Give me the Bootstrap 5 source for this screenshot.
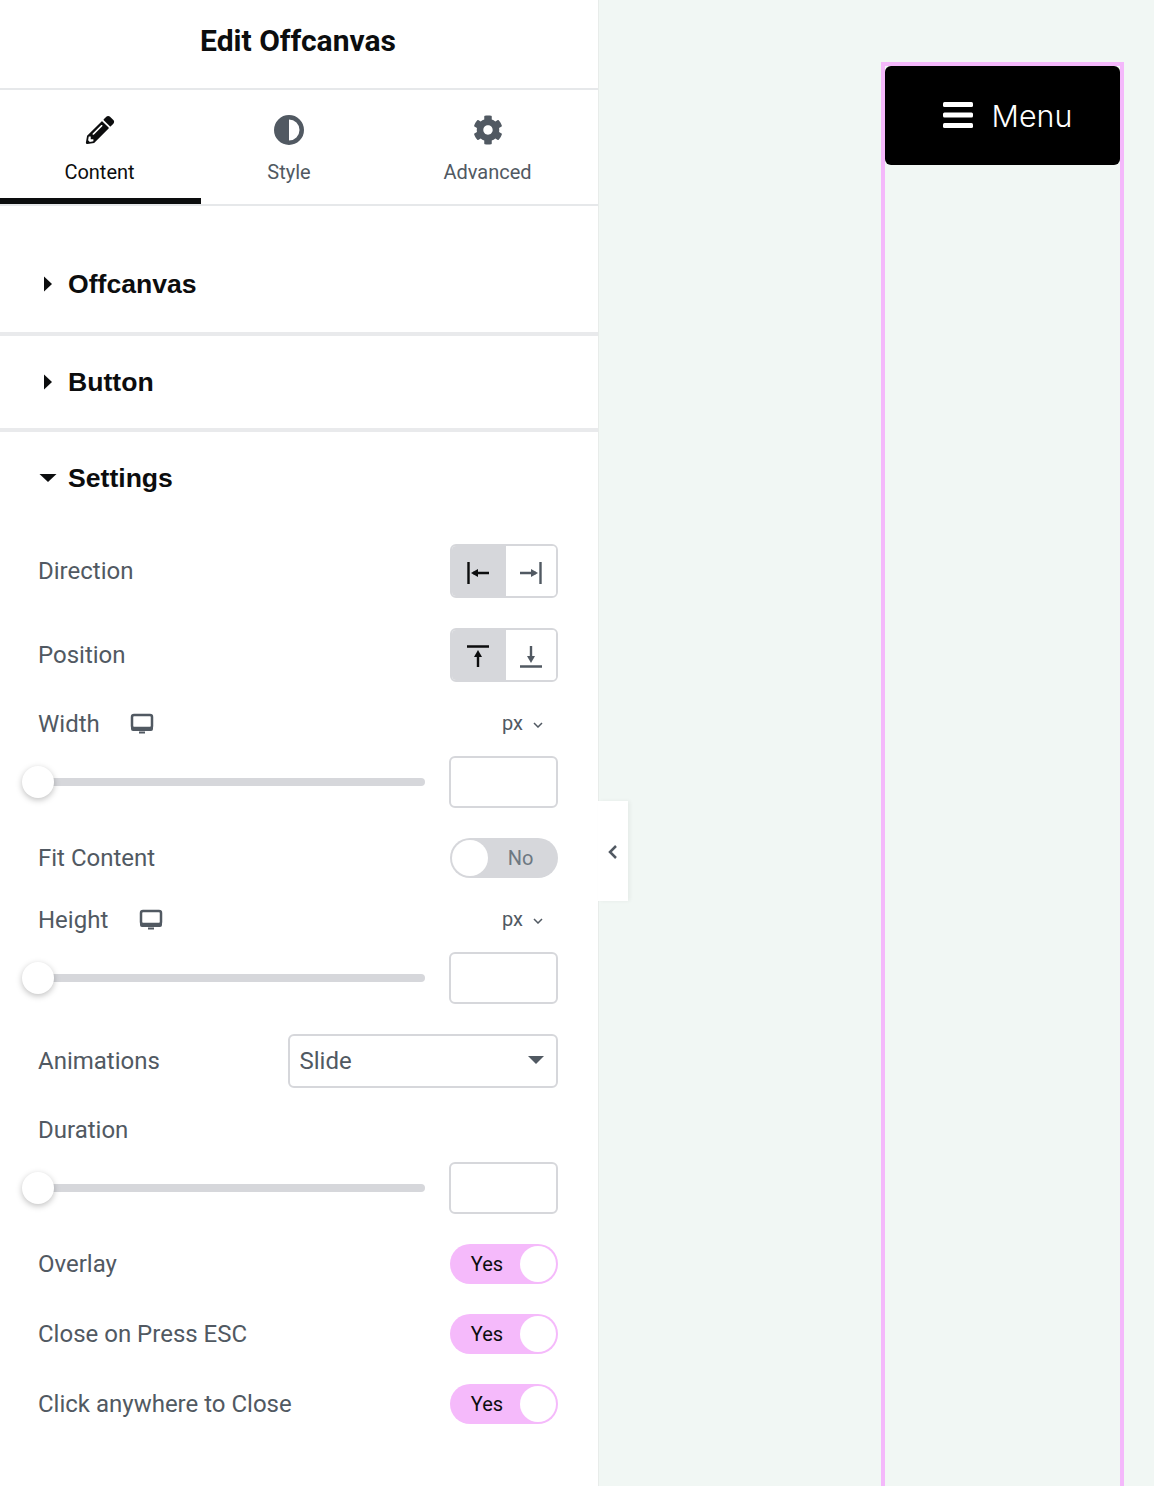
<!DOCTYPE html>
<html lang="en">
<head>
<meta charset="utf-8">
<title>Edit Offcanvas</title>
<link href="https://cdn.jsdelivr.net/npm/bootstrap@5.3.0/dist/css/bootstrap.min.css" rel="stylesheet">
<style>
html,body{height:1486px;overflow:hidden;}
body{font-family:Roboto,sans-serif;color:#515962;background:#f1f7f4;}
.editor{width:1154px;height:1486px;}
.side{width:598px;height:1486px;background:#fff;position:relative;flex:none;}
.head{height:90px;border-bottom:2px solid #e6e8ea;}
.head h1{font-family:Roboto,sans-serif;font-weight:700;font-size:30px;line-height:1;color:#0c0d0e;margin:-6px 0 0 -2px;}
.tabbar{height:116px;border-bottom:2px solid #e6e8ea;}
.tabitem{height:114px;font-size:20px;line-height:24px;padding-top:25px;border-bottom:6px solid transparent;}
.tabitem svg{display:block;margin-bottom:15px;}
.tabitem.on{color:#0c0d0e;border-bottom-color:#0c0d0e;padding-right:2px;}
.w1{width:201px;}.w2{width:176px;}.w3{width:221px;}
.sect{height:92px;padding-left:38px;}
.sect.first{height:126px;padding-top:30px;}
.sect-title{font-family:"Liberation Sans",sans-serif;font-weight:700;font-size:26.6px;line-height:92px;color:#0c0d0e;}
.caret{width:20px;margin-right:10px;}
.divide{height:4px;background:#e9eaec;}
.ctl{padding:20px 40px 0 38px;}
.lbl{font-size:24px;line-height:28px;}
.lbl-dev{gap:30.5px;}
.rowa{margin-top:30px;}
.rowb{margin-top:28px;height:28px;}
.rows{margin-top:18px;}
.seg{width:108px;height:54px;border:2px solid #d6d7db;border-radius:6px;overflow:hidden;}
.seg-i{height:100%;}
.seg-i.on{width:54px;background:#d6d7db;color:#0c0d0e;padding-right:2px;}
.seg-i.off{flex:1 1 auto;background:#fff;color:#515962;}
.seg-low .seg-i{padding-top:3px;}
.unit{font-size:20px;line-height:24px;padding:0 15px 2px 0;}
.unit svg{margin-left:10px;}
.track{width:387px;height:8px;background:#d6d7db;border-radius:4px;position:relative;}
.thumb{position:absolute;left:-16px;top:-12px;width:32px;height:32px;border-radius:50%;background:#fff;box-shadow:0 2px 6px rgba(0,0,0,.25);}
.numbox{width:109px;height:52px;border:2px solid #d6d7db;border-radius:6px;background:#fff;}
.numbox:focus{border-color:#d6d7db;box-shadow:none;}
.sw{width:108px;height:40px;border-radius:20px;font-size:20px;}
.sw-no{background:#d6d7db;color:#6d7882;padding:2px;}
.sw-no .sw-txt{padding-right:3px;}
.sw-yes{background:#f5bafb;color:#0c0d0e;padding:2px;}
.sw-yes .sw-txt{padding-left:2px;}
.knob{width:36px;height:36px;border-radius:50%;background:#fff;flex:none;}
.sw-txt{text-align:center;flex:1 1 auto;}
.pick{width:270px;height:54px;border:2px solid #d6d7db;border-radius:6px;font-size:24px;color:#515962;padding:0 10px 0 9.5px;background:#fff url("data:image/svg+xml,%3Csvg xmlns='http://www.w3.org/2000/svg' width='16' height='8'%3E%3Cpath d='M0 0h16L8 8z' fill='%23515962'/%3E%3C/svg%3E") no-repeat right 12px top 20px;}
.pick:focus{border-color:#d6d7db;box-shadow:none;}
.fold{position:absolute;left:598px;top:801px;width:30px;height:100px;background:#fff;box-shadow:2px 0 4px rgba(0,0,0,.05);z-index:2;padding-top:2px;}
.stage{flex:1 1 auto;height:1486px;padding:62px 30px 0 282px;border-left:1px solid #e8ecea;}
.column{height:1424px;border:solid #f4b8fb;border-width:4px 4px 0;}
.menu-btn{height:99px;width:100%;background:#000;color:#fff;border:0;border-radius:6px;font-family:Inter,sans-serif;font-weight:300;font-size:30.4px;gap:19px;padding:0 0 0 10px;}
.menu-btn:hover{background:#000;color:#fff;}
.menu-btn span{padding-top:2px;}
</style>
</head>
<body>
<div class="editor d-flex">
  <aside class="side">
    <header class="head d-flex align-items-center justify-content-center"><h1>Edit Offcanvas</h1></header>
    <nav class="tabbar d-flex">
      <div class="tabitem on w1 d-flex flex-column align-items-center">
        <svg width="30" height="30" viewBox="-16 -16 544 544" fill="#0c0d0e"><path d="M497.9 142.1l-46.1 46.1c-4.7 4.7-12.3 4.7-17 0l-111-111c-4.7-4.7-4.7-12.3 0-17l46.1-46.1c18.7-18.7 49.1-18.7 67.9 0l60.1 60.1c18.8 18.7 18.8 49.1 0 67.9zM284.2 99.8L21.6 362.4.4 483.9c-2.9 16.4 11.4 30.6 27.8 27.8l121.5-21.3 262.6-262.6c4.3-4.3 4.3-11.3 0-15.6l-112.5-112.5c-4.4-4.3-11.4-4.3-15.6 0zM124.1 339.9c-5.2-5.2-5.2-13.6 0-18.8l154-154c5.2-5.2 13.6-5.2 18.8 0s5.2 13.6 0 18.8l-154 154c-5.2 5.2-13.6 5.2-18.8 0zM88 424h48v36.3l-64.5 11.3-31.1-31.1L51.7 376H88v48z"/></svg>
        <span>Content</span>
      </div>
      <div class="tabitem w2 d-flex flex-column align-items-center">
        <svg width="30" height="30" viewBox="0 0 30 30" fill="#515962"><path fill-rule="evenodd" d="M15 0a15 15 0 1 0 0 30a15 15 0 0 0 0-30zM15 4.500a10.500 10.500 0 0 1 0 21z"/></svg>
        <span>Style</span>
      </div>
      <div class="tabitem w3 d-flex flex-column align-items-center">
        <svg width="30" height="30" viewBox="0 0 512 512" fill="#515962"><path d="M487.4 315.7l-42.6-24.6c4.3-23.2 4.3-47 0-70.2l42.6-24.6c4.9-2.8 7.1-8.6 5.5-14-11.1-35.6-30-67.8-54.7-94.6-3.8-4.1-10-5.1-14.8-2.3L380.8 110c-17.9-15.4-38.5-27.3-60.8-35.1V25.8c0-5.6-3.9-10.5-9.4-11.7-36.7-8.2-74.3-7.8-109.2 0-5.5 1.2-9.4 6.1-9.4 11.7V75c-22.2 7.9-42.8 19.8-60.8 35.1L88.7 85.5c-4.9-2.8-11-1.9-14.8 2.3-24.7 26.7-43.6 58.9-54.7 94.6-1.7 5.4.6 11.2 5.5 14L67.3 221c-4.3 23.2-4.3 47 0 70.2l-42.6 24.6c-4.9 2.8-7.1 8.6-5.5 14 11.1 35.6 30 67.8 54.7 94.6 3.8 4.1 10 5.1 14.8 2.3l42.6-24.6c17.9 15.4 38.5 27.3 60.8 35.1v49.2c0 5.6 3.9 10.5 9.4 11.7 36.7 8.2 74.3 7.8 109.2 0 5.5-1.2 9.4-6.1 9.4-11.7v-49.2c22.2-7.9 42.8-19.8 60.8-35.1l42.6 24.6c4.9 2.8 11 1.9 14.8-2.3 24.7-26.7 43.6-58.9 54.7-94.6 1.5-5.5-.7-11.3-5.6-14.1zM256 336c-44.1 0-80-35.9-80-80s35.9-80 80-80 80 35.9 80 80-35.9 80-80 80z"/></svg>
        <span>Advanced</span>
      </div>
    </nav>

    <section class="sect first d-flex align-items-center">
      <svg class="caret" width="20" height="18" viewBox="0 0 20 18" fill="#0c0d0e"><path d="M6 1.500l8 7.500-8 7.500z"/></svg>
      <span class="sect-title">Offcanvas</span>
    </section>
    <div class="divide"></div>
    <section class="sect d-flex align-items-center">
      <svg class="caret" width="20" height="18" viewBox="0 0 20 18" fill="#0c0d0e"><path d="M6 1.500l8 7.500-8 7.500z"/></svg>
      <span class="sect-title">Button</span>
    </section>
    <div class="divide"></div>
    <section class="sect d-flex align-items-center">
      <svg class="caret" width="20" height="16" viewBox="0 0 20 16" fill="#0c0d0e"><path d="M1.500 4h17l-8.500 8z"/></svg>
      <span class="sect-title">Settings</span>
    </section>

    <div class="ctl">
      <div class="d-flex justify-content-between align-items-center">
        <span class="lbl">Direction</span>
        <div class="seg seg-low d-flex">
          <div class="seg-i on d-flex align-items-center justify-content-center">
            <svg width="24" height="22" viewBox="0 0 24 22" fill="none" stroke="currentColor" stroke-width="2.400"><path d="M2.500 0v22M23 11H7"/><path d="M5 11l7-4v8z" fill="currentColor" stroke="none"/></svg>
          </div>
          <div class="seg-i off d-flex align-items-center justify-content-center">
            <svg width="24" height="22" viewBox="0 0 24 22" fill="none" stroke="currentColor" stroke-width="2.400"><path d="M21.500 0v22M1 11h16"/><path d="M19 11l-7-4v8z" fill="currentColor" stroke="none"/></svg>
          </div>
        </div>
      </div>
      <div class="d-flex justify-content-between align-items-center rowa">
        <span class="lbl">Position</span>
        <div class="seg d-flex">
          <div class="seg-i on d-flex align-items-center justify-content-center">
            <svg width="24" height="26" viewBox="0 0 24 26" fill="none" stroke="currentColor" stroke-width="2.400"><path d="M1 4.500h22M12 25V12"/><path d="M12 8l-4 7h8z" fill="currentColor" stroke="none"/></svg>
          </div>
          <div class="seg-i off d-flex align-items-center justify-content-center">
            <svg width="24" height="26" viewBox="0 0 24 26" fill="none" stroke="currentColor" stroke-width="2.400"><path d="M1 24.500h22M12 4v13"/><path d="M12 21l-4-7h8z" fill="currentColor" stroke="none"/></svg>
          </div>
        </div>
      </div>

      <div class="d-flex justify-content-between align-items-center rowb">
        <span class="d-flex align-items-center lbl lbl-dev">Width
          <svg width="24" height="22" viewBox="0 0 24 22" fill="none"><rect x="2" y="2" width="20" height="13" rx="2" fill="#fff" stroke="#515962" stroke-width="2.500"/><path d="M1 14h22v2a2 2 0 0 1-2 2H3a2 2 0 0 1-2-2z" fill="#515962"/><path d="M9 19.500h6" stroke="#515962" stroke-width="2"/></svg>
        </span>
        <span class="unit">px<svg width="10" height="6" viewBox="0 0 10 6" fill="none" stroke="#515962" stroke-width="1.500"><path d="M1 1l4 4 4-4"/></svg></span>
      </div>
      <div class="d-flex justify-content-between align-items-center rows">
        <div class="track"><div class="thumb"></div></div>
        <input class="form-control numbox" type="text" aria-label="Width">
      </div>

      <div class="d-flex justify-content-between align-items-center rowa">
        <span class="lbl">Fit Content</span>
        <div class="sw sw-no d-flex align-items-center"><span class="knob"></span><span class="sw-txt">No</span></div>
      </div>

      <div class="d-flex justify-content-between align-items-center rowb">
        <span class="d-flex align-items-center lbl lbl-dev">Height
          <svg width="24" height="22" viewBox="0 0 24 22" fill="none"><rect x="2" y="2" width="20" height="13" rx="2" fill="#fff" stroke="#515962" stroke-width="2.500"/><path d="M1 14h22v2a2 2 0 0 1-2 2H3a2 2 0 0 1-2-2z" fill="#515962"/><path d="M9 19.500h6" stroke="#515962" stroke-width="2"/></svg>
        </span>
        <span class="unit">px<svg width="10" height="6" viewBox="0 0 10 6" fill="none" stroke="#515962" stroke-width="1.500"><path d="M1 1l4 4 4-4"/></svg></span>
      </div>
      <div class="d-flex justify-content-between align-items-center rows">
        <div class="track"><div class="thumb"></div></div>
        <input class="form-control numbox" type="text" aria-label="Height">
      </div>

      <div class="d-flex justify-content-between align-items-center rowa">
        <span class="lbl">Animations</span>
        <select class="form-select pick" aria-label="Animations"><option>Slide</option></select>
      </div>

      <div class="d-flex align-items-center rowb"><span class="lbl">Duration</span></div>
      <div class="d-flex justify-content-between align-items-center rows">
        <div class="track"><div class="thumb"></div></div>
        <input class="form-control numbox" type="text" aria-label="Duration">
      </div>

      <div class="d-flex justify-content-between align-items-center rowa">
        <span class="lbl">Overlay</span>
        <div class="sw sw-yes d-flex align-items-center"><span class="sw-txt">Yes</span><span class="knob"></span></div>
      </div>
      <div class="d-flex justify-content-between align-items-center rowa">
        <span class="lbl">Close on Press ESC</span>
        <div class="sw sw-yes d-flex align-items-center"><span class="sw-txt">Yes</span><span class="knob"></span></div>
      </div>
      <div class="d-flex justify-content-between align-items-center rowa">
        <span class="lbl">Click anywhere to Close</span>
        <div class="sw sw-yes d-flex align-items-center"><span class="sw-txt">Yes</span><span class="knob"></span></div>
      </div>
    </div>

    <div class="fold d-flex align-items-center justify-content-center">
      <svg width="10" height="16" viewBox="0 0 10 16" fill="none" stroke="#515962" stroke-width="2.500"><path d="M8 2L2 8l6 6"/></svg>
    </div>
  </aside>

  <main class="stage">
    <div class="column">
      <button class="btn menu-btn d-flex align-items-center justify-content-center" type="button">
        <svg width="30" height="28" viewBox="0 0 30 28" fill="#fff"><rect width="30" height="5" rx="1.500"/><rect y="10.500" width="30" height="5" rx="1.500"/><rect y="21" width="30" height="5" rx="1.500"/></svg>
        <span>Menu</span>
      </button>
    </div>
  </main>
</div>
</body>
</html>
